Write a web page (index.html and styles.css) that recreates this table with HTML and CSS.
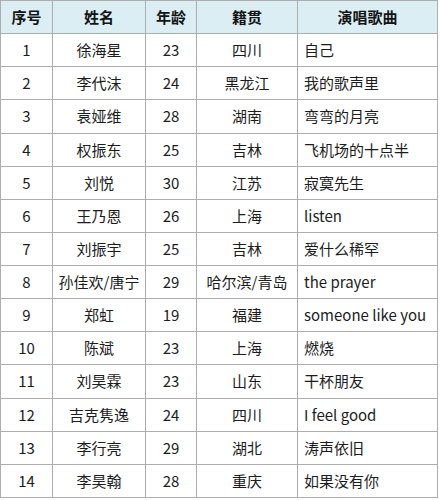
FILE: index.html
```html
<!DOCTYPE html>
<html lang="zh">
<head>
<meta charset="utf-8">
<link rel="stylesheet" href="styles.css">
</head>
<body>
<table class="tbl">
  <colgroup>
    <col class="c1"><col class="c2"><col class="c3"><col class="c4"><col class="c5">
  </colgroup>
  <thead>
    <tr><th>序号</th><th>姓名</th><th>年龄</th><th>籍贯</th><th>演唱歌曲</th></tr>
  </thead>
  <tbody>
    <tr><td>1</td><td>徐海星</td><td>23</td><td>四川</td><td class="song">自己</td></tr>
    <tr><td>2</td><td>李代沫</td><td>24</td><td>黑龙江</td><td class="song">我的歌声里</td></tr>
    <tr><td>3</td><td>袁娅维</td><td>28</td><td>湖南</td><td class="song">弯弯的月亮</td></tr>
    <tr><td>4</td><td>权振东</td><td>25</td><td>吉林</td><td class="song">飞机场的十点半</td></tr>
    <tr><td>5</td><td>刘悦</td><td>30</td><td>江苏</td><td class="song">寂寞先生</td></tr>
    <tr><td>6</td><td>王乃恩</td><td>26</td><td>上海</td><td class="song">listen</td></tr>
    <tr><td>7</td><td>刘振宇</td><td>25</td><td>吉林</td><td class="song">爱什么稀罕</td></tr>
    <tr><td>8</td><td>孙佳欢/唐宁</td><td>29</td><td>哈尔滨/青岛</td><td class="song">the prayer</td></tr>
    <tr><td>9</td><td>郑虹</td><td>19</td><td>福建</td><td class="song">someone like you</td></tr>
    <tr><td>10</td><td>陈斌</td><td>23</td><td>上海</td><td class="song">燃烧</td></tr>
    <tr><td>11</td><td>刘昊霖</td><td>23</td><td>山东</td><td class="song">干杯朋友</td></tr>
    <tr><td>12</td><td>吉克隽逸</td><td>24</td><td>四川</td><td class="song">I feel good</td></tr>
    <tr><td>13</td><td>李行亮</td><td>29</td><td>湖北</td><td class="song">涛声依旧</td></tr>
    <tr><td>14</td><td>李昊翰</td><td>28</td><td>重庆</td><td class="song">如果没有你</td></tr>
  </tbody>
</table>
</body>
</html>
```
FILE: styles.css
```css
html, body {
  margin: 0;
  padding: 0;
  background: #ffffff;
}
.tbl {
  border-collapse: collapse;
  table-layout: fixed;
  width: 437px;
  font-family: "Noto Sans CJK SC", "Noto Sans", sans-serif;
  font-size: 15px;
  color: #1c1c1c;
}
.c1 { width: 52px; }
.c2 { width: 93px; }
.c3 { width: 51px; }
.c4 { width: 101px; }
.c5 { width: 140px; }
.tbl th, .tbl td {
  border: 1px solid #adadad;
  height: 32.13px;
  padding: 0;
  text-align: center;
  vertical-align: middle;
  white-space: nowrap;
  line-height: 20px;
}
.tbl th {
  background: #dbeef4;
  font-weight: bold;
  color: #141414;
}
.tbl td.song {
  text-align: left;
  padding-left: 6px;
}
```
